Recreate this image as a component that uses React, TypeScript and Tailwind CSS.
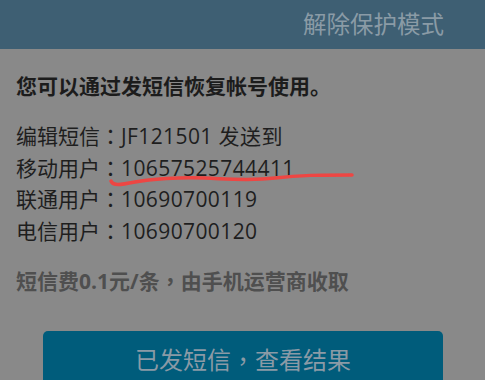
const rows = [
  { label: "编辑短信", value: "JF121501 发送到" },
  { label: "移动用户", value: "10657525744411" },
  { label: "联通用户", value: "10690700119" },
  { label: "电信用户", value: "10690700120" },
]

// centered full-width punctuation, as on the phone
function Punct({ children }: { children: string }) {
  return <span style={{ fontFamily: '"Noto Sans CJK TC", sans-serif' }}>{children}</span>
}

export default function App() {
  return (
    <div
      className="relative h-[380px] w-[485px] overflow-hidden bg-[#898989]"
      style={{ fontFamily: '"Open Sans", "Noto Sans CJK SC", sans-serif' }}
    >
      <div className="flex h-[49px] items-center justify-end bg-[#3e5f73] pr-[41px]">
        <span className="text-[23.5px] text-[#8a9ba6]">解除保护模式</span>
      </div>

      <div className="px-[16px] pt-[22px]">
        <p className="text-[21px] font-bold leading-[30px] text-[#1c1c1c]">您可以通过发短信恢复帐号使用。</p>

        <div className="mt-[19px] text-[21px] leading-[30.5px] text-[#1e1e1e]">
          {rows.map((row) => (
            <p key={row.label}>
              {row.label}
              <Punct>：</Punct>
              <span className="tracking-[0.4px]">{row.value}</span>
            </p>
          ))}
        </div>

        <p className="mt-[19px] text-[21px] font-bold leading-[30px] text-[#4f4f4f]">
          短信费0.1元/条<Punct>，</Punct>由手机运营商收取
        </p>

        <button className="mx-[27px] mt-[35px] flex h-[58px] w-[400px] items-center justify-center rounded-[5px] bg-[#005c7b] text-[24px] text-[#8a9aa6]">
          已发短信<Punct>，</Punct>查看结果
        </button>
      </div>

      <svg className="pointer-events-none absolute left-0 top-0" width="485" height="380" viewBox="0 0 485 380">
        <path
          d="M111 181 C113 186, 120 185, 135 182 S 180 177, 205 178 S 250 181, 275 178 S 320 175, 352 175"
          fill="none"
          stroke="#ee4643"
          strokeWidth="3.5"
          strokeLinecap="round"
        />
      </svg>
    </div>
  )
}
